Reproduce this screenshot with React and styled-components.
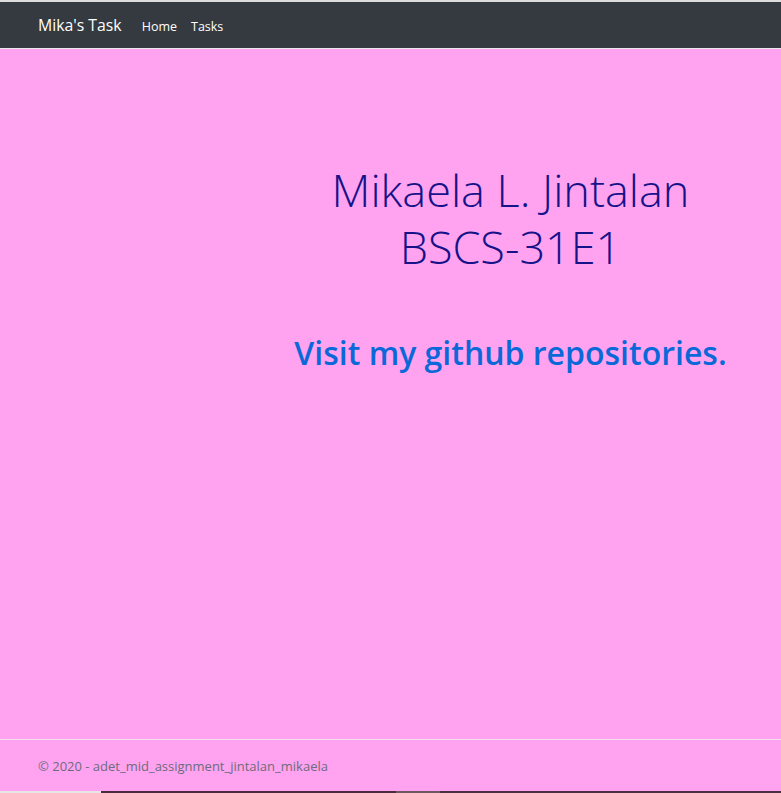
import React from "react";
import styled, { createGlobalStyle } from "styled-components";

const Global = createGlobalStyle`
  html, body { margin: 0; padding: 0; }
  body {
    background: #ffa3f0;
    font-family: "Open Sans", "Noto Sans", "Liberation Sans", sans-serif;
    font-size: 14px;
  }
`;

const Page = styled.div`
  display: flex;
  flex-direction: column;
  height: 793px;
  overflow: hidden;
`;

const TopEdge = styled.div`
  height: 2px;
  background: #dcdcdc;
`;

const Navbar = styled.nav`
  height: 46px;
  background: #343a40;
  border-bottom: 1px solid #e8e8ee;
  display: flex;
  align-items: center;
  padding-left: 38px;
  gap: 20px;
`;

const Brand = styled.a`
  color: #fff;
  font-size: 15.8px;
  text-decoration: none;
  margin-top: -1px;
`;

const NavLinks = styled.div`
  display: flex;
  gap: 14px;
`;

const NavLink = styled.a`
  color: #fff;
  font-size: 12.5px;
  text-decoration: none;
  margin-top: 2px;
`;

const Main = styled.main`
  flex: 1;
  display: flex;
  flex-direction: column;
  align-items: center;
  padding-left: 240px;
  padding-top: 112px;
`;

const Display = styled.h1`
  margin: 0;
  font-weight: 300;
  color: #16128a;
  font-size: 45px;
  line-height: 57px;
  text-align: center;
`;

const Visit = styled.a`
  margin-top: 58px;
  color: #0a68d8;
  font-weight: 600;
  font-size: 32px;
  text-decoration: none;
  line-height: 40px;
`;

const Footer = styled.footer`
  height: 51px;
  border-top: 1px solid #f2e0ee;
  display: flex;
  align-items: center;
  padding-left: 38px;
  color: #6c6c7c;
  font-size: 13px;
`;

const BottomStrip = styled.div`
  height: 2px;
  display: flex;
`;

const StripPart = styled.div`
  width: ${(p) => p.$w};
  flex: ${(p) => (p.$grow ? 1 : "none")};
  background: ${(p) => p.$c};
`;

export default function App() {
  return (
    <>
      <Global />
      <Page>
        <TopEdge />
        <Navbar>
          <Brand href="#">Mika's Task</Brand>
          <NavLinks>
            <NavLink href="#">Home</NavLink>
            <NavLink href="#">Tasks</NavLink>
          </NavLinks>
        </Navbar>
        <Main>
          <Display>
            Mikaela L. Jintalan
            <br />
            BSCS-31E1
          </Display>
          <Visit href="#">Visit my github repositories.</Visit>
        </Main>
        <Footer>© 2020 - adet_mid_assignment_jintalan_mikaela</Footer>
        <BottomStrip>
          <StripPart $w="101px" $c="#e6e6e6" />
          <StripPart $w="295px" $c="#4a2a3c" />
          <StripPart $w="44px" $c="#6e5860" />
          <StripPart $grow $c="#4a3040" />
        </BottomStrip>
      </Page>
    </>
  );
}
